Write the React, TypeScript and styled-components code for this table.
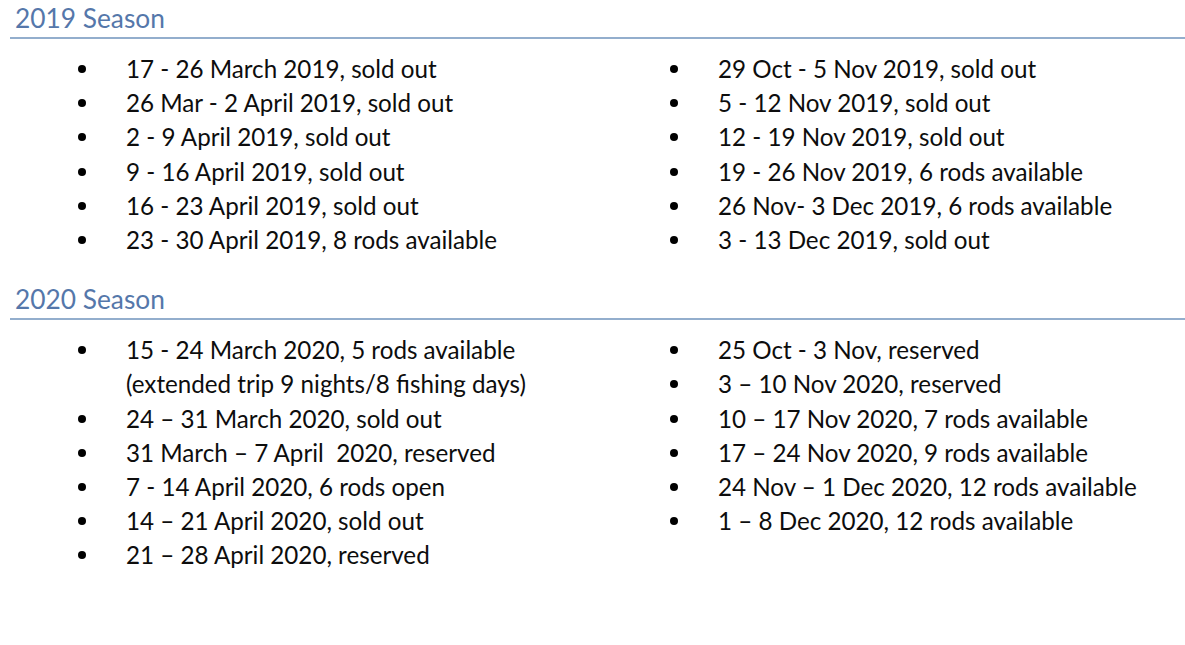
import React from "react";
import styled, { createGlobalStyle } from "styled-components";

const Global = createGlobalStyle`
  html, body { margin: 0; padding: 0; background: #ffffff; }
  body { font-family: Lato, "Open Sans", sans-serif; color: #0d0d0d; }
`;

const Page = styled.div`
  width: 1185px;
  height: 645px;
  overflow: hidden;
  background: #fff;
  padding-top: 1px;
  box-sizing: border-box;
`;

const Section = styled.section<{ $gap: number }>`
  margin-top: ${(p) => p.$gap}px;
`;

const Heading = styled.h2`
  margin: 0 0 0 10px;
  padding: 0 0 1px 5px;
  font-family: Lato, "Open Sans", sans-serif;
  font-weight: 400;
  font-size: 26.3px;
  line-height: 35px;
  color: #5577aa;
  border-bottom: 2px solid #93aecd;
`;

const Columns = styled.div`
  display: grid;
  grid-template-columns: 592px 1fr;
  margin-top: 13px;
`;

const List = styled.ul`
  list-style: none;
  margin: 0;
  padding: 0;
`;

const Item = styled.li`
  display: grid;
  grid-template-columns: 126px 1fr;
  font-size: 24.2px;
  line-height: 34.2px;
  white-space: pre-wrap;
`;

const Bullet = styled.span`
  width: 8px;
  height: 8px;
  border-radius: 50%;
  background: #000;
  margin: 13px 0 0 78px;
`;

const Text = styled.span``;

type Col = string[][];

const s2019: [Col, Col] = [
  [
    ["17 - 26 March 2019, sold out"],
    ["26 Mar - 2 April 2019, sold out"],
    ["2 - 9 April 2019, sold out"],
    ["9 - 16 April 2019, sold out"],
    ["16 - 23 April 2019, sold out"],
    ["23 - 30 April 2019, 8 rods available"],
  ],
  [
    ["29 Oct - 5 Nov 2019, sold out"],
    ["5 - 12 Nov 2019, sold out"],
    ["12 - 19 Nov 2019, sold out"],
    ["19 - 26 Nov 2019, 6 rods available"],
    ["26 Nov- 3 Dec 2019, 6 rods available"],
    ["3 - 13 Dec 2019, sold out"],
  ],
];

const s2020: [Col, Col] = [
  [
    ["15 - 24 March 2020, 5 rods available", "(extended trip 9 nights/8 fishing days)"],
    ["24 \u2013 31 March 2020, sold out"],
    ["31 March \u2013 7 April  2020, reserved"],
    ["7 - 14 April 2020, 6 rods open"],
    ["14 \u2013 21 April 2020, sold out"],
    ["21 \u2013 28 April 2020, reserved"],
  ],
  [
    ["25 Oct - 3 Nov, reserved"],
    ["3 \u2013 10 Nov 2020, reserved"],
    ["10 \u2013 17 Nov 2020, 7 rods available"],
    ["17 \u2013 24 Nov 2020, 9 rods available"],
    ["24 Nov \u2013 1 Dec 2020, 12 rods available"],
    ["1 \u2013 8 Dec 2020, 12 rods available"],
  ],
];

const Column = ({ items }: { items: Col }) => (
  <List>
    {items.map((lines, i) => (
      <Item key={i}>
        <Bullet />
        <Text>
          {lines.map((l, j) => (
            <React.Fragment key={j}>
              {j > 0 && <br />}
              {l}
            </React.Fragment>
          ))}
        </Text>
      </Item>
    ))}
  </List>
);

const Season = ({ title, data, gap }: { title: string; data: [Col, Col]; gap: number }) => (
  <Section $gap={gap}>
    <Heading>{title}</Heading>
    <Columns>
      <Column items={data[0]} />
      <Column items={data[1]} />
    </Columns>
  </Section>
);

export default function App() {
  return (
    <Page>
      <Global />
      <Season title="2019 Season" data={s2019} gap={0} />
      <Season title="2020 Season" data={s2020} gap={25} />
    </Page>
  );
}
